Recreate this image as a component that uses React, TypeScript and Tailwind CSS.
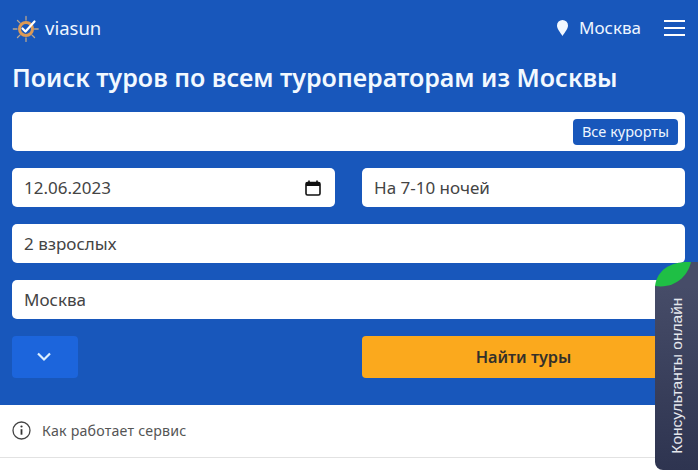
function Logo() {
  return (
    <svg width="28" height="28" viewBox="0 0 28 28" fill="none" className="shrink-0">
      <g transform="translate(1 1)">
        <g stroke="#b8a58f" strokeWidth="1.300" strokeLinecap="round">
          <path d="M13 1.500v3.500M13 23v3.500M.3 14h3.700M21.500 14h3.700M4.500 5.500l2.400 2.400M19.100 20.100l2.400 2.400M4.500 22.500l2.400-2.400" />
        </g>
        <circle cx="13" cy="14" r="6.500" stroke="#dd9a55" strokeWidth="3" />
        <path d="M9.500 13.500l3 3L21.500 6.500" stroke="#fff" strokeWidth="2.200" strokeLinecap="round" strokeLinejoin="round" />
      </g>
    </svg>
  );
}

function Field({ children }: { children: React.ReactNode }) {
  return (
    <div className="flex h-[39px] items-center justify-between rounded-[5px] bg-white px-3 text-[17px] text-[#444]">
      {children}
    </div>
  );
}

export default function App() {
  return (
    <div className="relative h-[472px] w-[698px] overflow-hidden bg-white font-['Noto_Sans',sans-serif]">
      <div className="flex h-[405px] flex-col bg-[#1857bb] px-3 pr-[13px]">
        <div className="flex h-[56px] shrink-0 items-center justify-between">
          <div className="flex items-center gap-[5px]">
            <Logo />
            <span className="text-[18.500px] text-[#eef6ff]">viasun</span>
          </div>
          <div className="flex items-center">
            <svg width="13" height="18" viewBox="0 0 13 18" className="mr-[10px]">
              <path d="M6.500 17C4 13 1 10 1 6.500a5.500 5.500 0 0 1 11 0C12 10 9 13 6.500 17z" fill="#f2f8ff" />
            </svg>
            <span className="mr-[23px] text-[17px] text-[#eef6ff]">Москва</span>
            <div className="flex w-[21px] flex-col gap-[5px]">
              <div className="h-[2px] bg-white" />
              <div className="h-[2px] bg-white" />
              <div className="h-[2px] bg-white" />
            </div>
          </div>
        </div>
        <h1 className="mt-[2px] h-[38px] text-[25px] leading-[38px] font-semibold whitespace-nowrap text-[#f2f9ff]">
          Поиск туров по всем туроператорам из Москвы
        </h1>
        <div className="mt-[16px] flex flex-col gap-[17px]">
          <div className="flex h-[39px] items-center justify-end rounded-[5px] bg-white pr-[7px]">
            <div className="flex h-[26px] w-[105px] items-center justify-center rounded-[4px] bg-[#1857bb] text-[14.500px] text-[#eef6ff]">
              Все курорты
            </div>
          </div>
          <div className="grid grid-cols-2 gap-[27px]">
            <Field>
              <span>12.06.2023</span>
              <svg width="18" height="18" viewBox="0 0 18 18" fill="none" className="mr-[1px]">
                <path d="M2 5.500h14" stroke="#111" strokeWidth="3" />
                <rect x="2" y="3.500" width="14" height="12.500" rx="1.500" stroke="#111" strokeWidth="1.600" />
                <path d="M5 1.500v2M13 1.500v2" stroke="#111" strokeWidth="1.600" />
              </svg>
            </Field>
            <Field>На 7-10 ночей</Field>
          </div>
          <Field>2 взрослых</Field>
          <Field>Москва</Field>
          <div className="grid grid-cols-2 gap-[27px]">
            <div className="flex h-[42px] w-[66px] items-center justify-center rounded-[4px] bg-[#1c65dc]">
              <svg width="16" height="10" viewBox="0 0 16 10" fill="none" className="mr-[2px]">
                <path d="M2 1.500L8 7.500L14 1.500" stroke="#dcefff" strokeWidth="2.200" />
              </svg>
            </div>
            <div className="flex h-[42px] items-center justify-center rounded-[4px] bg-[#fba91d] text-[16.300px] font-semibold text-[#33302a]">
              Найти туры
            </div>
          </div>
        </div>
      </div>
      <div className="flex h-[53px] items-center gap-[11px] border-b border-[#e2e2e2] pb-[1px] pl-3">
        <svg width="19" height="19" viewBox="0 0 19 19" fill="none">
          <circle cx="9.500" cy="9.500" r="8.500" stroke="#444" strokeWidth="1.300" />
          <path d="M9.500 8.200v5.500" stroke="#333" strokeWidth="1.800" />
          <circle cx="9.500" cy="5.500" r="1.100" fill="#333" />
        </svg>
        <span className="text-[14.200px] tracking-[0.2px] text-[#555]">Как работает сервис</span>
      </div>
      <div className="absolute top-[286px] left-[655px] flex h-[184px] w-[43px] items-center justify-center rounded-bl-[8px] bg-gradient-to-b from-[#464c68] to-[#2e3450]">
        <span className="mt-[-4px] -rotate-90 font-['Liberation_Sans',sans-serif] text-[15.500px] font-medium whitespace-nowrap text-[#e6e8ee]">
          Консультанты онлайн
        </span>
      </div>
      <svg width="44" height="26" viewBox="0 0 44 26" className="absolute top-[261px] left-[654px]">
        <path d="M1 25.500L37 1H44V26H1z" fill="#464c68" />
        <path d="M1 25C3 8 18 0 37 1C34 14 22 28 1 25z" fill="#1fbf45" />
      </svg>
    </div>
  );
}
